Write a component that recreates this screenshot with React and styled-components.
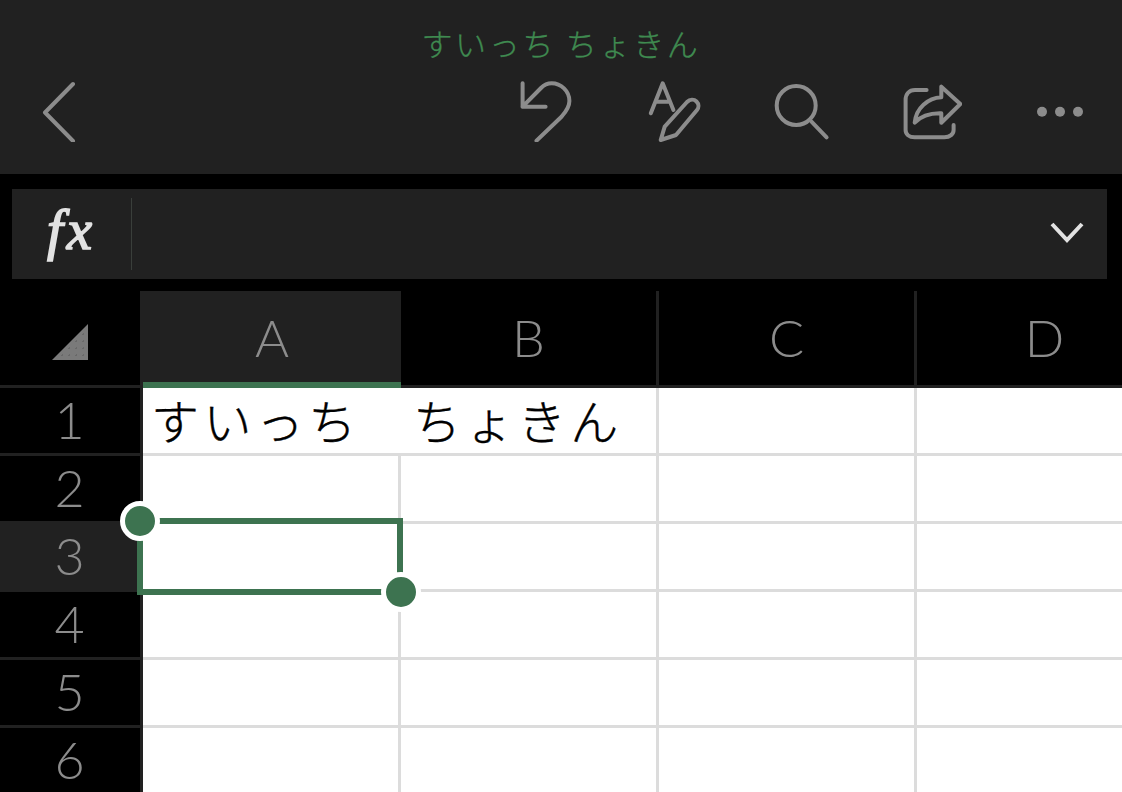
import React from 'react'
import styled, { createGlobalStyle } from 'styled-components'

const GlobalStyle = createGlobalStyle`
    html, body {
        margin: 0;
        background: #000;
        font-family: "Noto Sans CJK JP", "Liberation Sans", sans-serif;
    }
`

const Page = styled.div`
    width: 1122px;
    height: 792px;
    overflow: hidden;
    background: #000;
    display: flex;
    flex-direction: column;
`

const TopBar = styled.header`
    height: 174px;
    box-sizing: border-box;
    background: #212121;
    padding-top: 23px;
    flex-shrink: 0;
`

const Title = styled.div`
    height: 40px;
    line-height: 40px;
    text-align: center;
    font-size: 31px;
    letter-spacing: 2.7px;
    font-weight: 300;
    -webkit-text-stroke: 0.3px #3f8a50;
    color: #3f8a50;
    white-space: nowrap;
`

const Toolbar = styled.div`
    display: flex;
    align-items: center;
    justify-content: space-between;
    margin-top: 15px;
    padding: 0 32px 0 27px;
`

const ToolGroup = styled.div`
    display: flex;
    gap: 64px;
`

const Icon = styled.svg`
    width: 64px;
    height: 64px;
    display: block;
    fill: none;
    stroke: #8c8c8c;
    stroke-width: 4;
    stroke-linecap: round;
    stroke-linejoin: round;
`

const FormulaBar = styled.div`
    height: 90px;
    margin: 15px 15px 12px 12px;
    background: #212121;
    display: flex;
    align-items: center;
    flex-shrink: 0;
`

const FxLabel = styled.div`
    width: 120px;
    height: 72px;
    box-sizing: border-box;
    border-right: 1px solid #3a3f3b;
    text-align: center;
    line-height: 63px;
    font-family: "Liberation Serif", serif;
    font-style: italic;
    font-weight: 400;
    font-size: 57px;
    letter-spacing: 4px;
    -webkit-text-stroke: 1.6px #e2e2e2;
    color: #e2e2e2;
`

const ExpandIcon = styled.svg`
    width: 36px;
    height: 24px;
    margin-left: auto;
    margin-right: 22px;
    margin-bottom: 3px;
    fill: none;
    stroke: #e2e2e2;
    stroke-width: 4;
`

const Sheet = styled.div`
    flex: 1;
    overflow: hidden;
    display: grid;
    grid-template-columns: 143px repeat(4, 258px);
    grid-template-rows: 97px repeat(6, 68px);
`

const Corner = styled.div`
    box-sizing: border-box;
    border-right: 3px solid #212121;
    border-bottom: 3px solid #212121;
    display: flex;
    align-items: flex-end;
    justify-content: flex-end;
    padding: 0 52px 25px 0;
`

const Triangle = styled.div`
    width: 36px;
    height: 36px;
    background-color: #7a7a7a;
    background-image: radial-gradient(circle, #696969 1px, transparent 1px);
    background-size: 7px 7px;
    clip-path: polygon(100% 0, 100% 100%, 0 100%);
`

const HeaderLabel = styled.div`
    box-sizing: border-box;
    display: flex;
    align-items: center;
    justify-content: center;
    font-family: Lato, Roboto, "Liberation Sans", sans-serif;
    font-weight: 300;
    font-size: 52px;
    color: #8c8c8c;
`

const ColumnHeader = styled(HeaderLabel)`
    background: ${p => (p.$active ? '#212121' : '#000')};
    border-right: ${p => (p.$active ? 'none' : '3px solid #212121')};
    border-bottom: ${p => (p.$active ? '6px solid #3d7350' : '3px solid #212121')};
    padding-bottom: ${p => (p.$active ? '0' : '3px')};
`

const RowHeader = styled(HeaderLabel)`
    background: ${p => (p.$active ? '#212121' : '#000')};
    border-right: 3px solid #212121;
    border-bottom: 3px solid #212121;
    padding: 0 1px 4px 0;
`

const Cell = styled.div`
    position: relative;
    box-sizing: border-box;
    background: #fff;
    border-bottom: 3px solid #dcdcdc;
    border-right: ${p => (p.$open ? 'none' : '3px solid #dcdcdc')};
`

const CellText = styled.span`
    display: block;
    position: relative;
    z-index: 1;
    padding-left: 8px;
    line-height: 63px;
    font-size: 48px;
    font-weight: 300;
    -webkit-text-stroke: 0.4px #000;
    letter-spacing: 4.4px;
    color: #000;
    white-space: nowrap;
`

const Selection = styled.div`
    position: absolute;
    z-index: 2;
    left: -6px;
    top: -6px;
    width: 266px;
    height: 77px;
    box-sizing: border-box;
    border: 6px solid #3d7350;
`

const Handle = styled.div`
    position: absolute;
    width: 40px;
    height: 40px;
    box-sizing: border-box;
    border-radius: 50%;
    background: #3d7350;
    border: 5.5px solid #fff;
    ${p => (p.$end ? 'right: -24px; bottom: -23px;' : 'left: -23px; top: -23px;')}
`

const columns = ['A', 'B', 'C', 'D']
const rows = [1, 2, 3, 4, 5, 6]

export default function App() {
    return (
        <Page>
            <GlobalStyle />
            <TopBar>
                <Title>すいっち ちょきん</Title>
                <Toolbar>
                    <Icon viewBox="0 0 64 64">
                        <path d="M46 6 L18 34.5 L46 63" />
                    </Icon>
                    <ToolGroup>
                        <Icon viewBox="0 0 64 64">
                            <path d="M8.6 5.3 V28.7 H31.6 M8.6 28.7 L27 10 C30 7 34 5.3 37.6 5.3 C47 5.3 55.4 13 55.4 23 C55.4 30 51 34.5 47.5 38.7 L22.5 62.7" />
                        </Icon>
                        <Icon viewBox="0 0 64 64">
                            <path d="M8.8 35.3 L20.7 5.3 L31.4 32 M13.6 23.7 H27.8" />
                            <path d="M18.7 62 L22.7 48.7 L45 24 C48 21 52 21 54.5 23.5 C57 26 57 29.5 55 32 L34 57 Z" />
                        </Icon>
                        <Icon viewBox="0 0 64 64">
                            <circle cx="26.2" cy="27.5" r="19.5" />
                            <path d="M41.5 43.7 L56.6 59.3" />
                        </Icon>
                        <Icon viewBox="0 0 64 64">
                            <path d="M28.6 12 H17 C11 12 7.6 16 7.6 22 V52 C7.6 56 11 59.3 16.7 59.3 H46.4 C52 59.3 55.6 56 55.6 52 V47" />
                            <path d="M62.3 26 L43.3 8.7 V19.3 C30 20 18 30 16.7 44.7 C23 38 33 35 43.3 35.3 V44.7 Z" />
                        </Icon>
                        <Icon viewBox="0 0 64 64">
                            <g fill="#8c8c8c" stroke="none">
                                <circle cx="16" cy="33.7" r="5" />
                                <circle cx="34" cy="33.7" r="5" />
                                <circle cx="52" cy="33.7" r="5" />
                            </g>
                        </Icon>
                    </ToolGroup>
                </Toolbar>
            </TopBar>

            <FormulaBar>
                <FxLabel>fx</FxLabel>
                <ExpandIcon viewBox="0 0 36 24">
                    <path d="M3 3 L18 19 L33 3" />
                </ExpandIcon>
            </FormulaBar>

            <Sheet>
                <Corner>
                    <Triangle />
                </Corner>
                {columns.map(col => (
                    <ColumnHeader key={col} $active={col === 'A'}>{col}</ColumnHeader>
                ))}
                {rows.map(row => (
                    <React.Fragment key={row}>
                        <RowHeader $active={row === 3}>{row}</RowHeader>
                        {columns.map(col => (
                            <Cell key={col} $open={row === 1 && col === 'A'}>
                                {row === 1 && col === 'A' && <CellText>すいっち　ちょきん</CellText>}
                                {row === 3 && col === 'A' && (
                                    <Selection>
                                        <Handle />
                                        <Handle $end />
                                    </Selection>
                                )}
                            </Cell>
                        ))}
                    </React.Fragment>
                ))}
            </Sheet>
        </Page>
    )
}
